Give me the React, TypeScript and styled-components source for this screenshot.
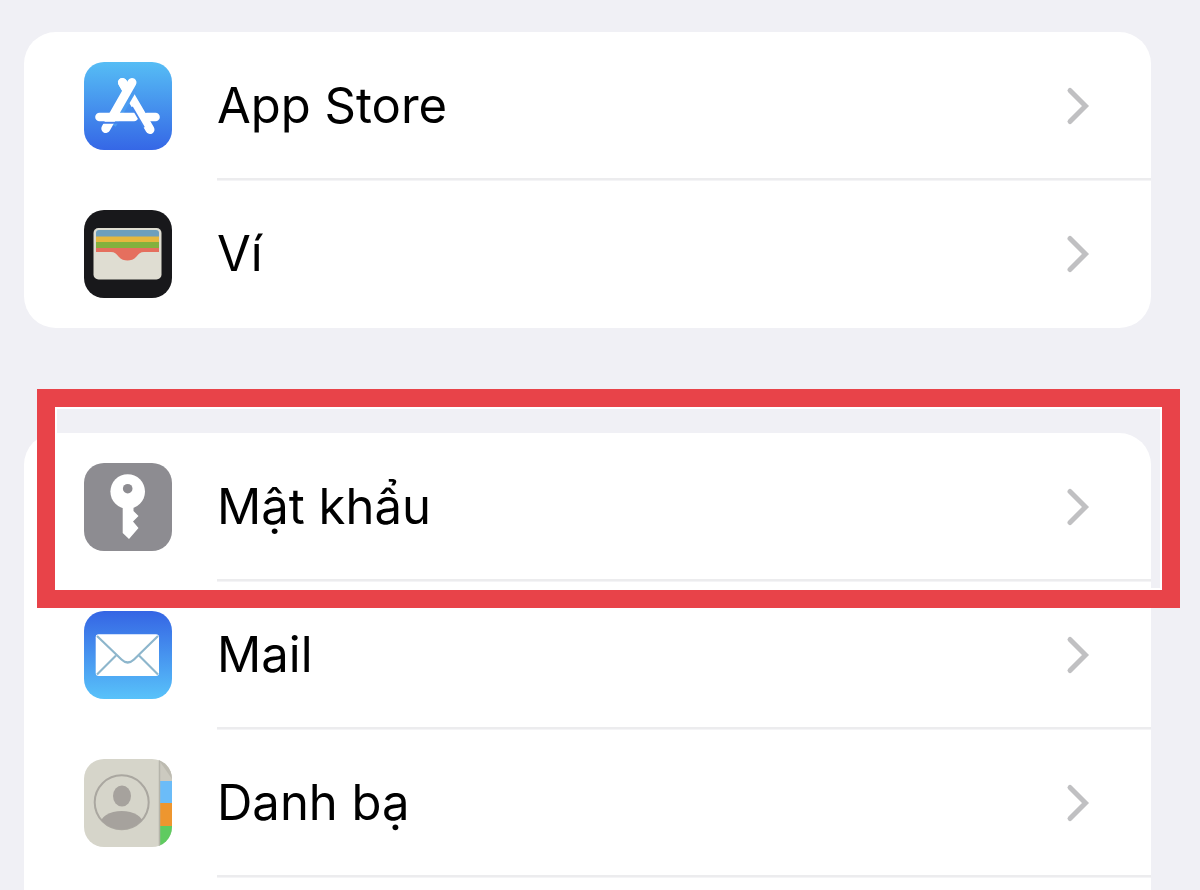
import React from "react";
import styled, { createGlobalStyle } from "styled-components";

const GlobalStyle = createGlobalStyle`
  *, *::before, *::after { box-sizing: border-box; }
  body {
    margin: 0;
    background: #f0f0f5;
    color: #000;
    font-family: Inter, "Liberation Sans", sans-serif;
  }
`;

const Page = styled.main`
  display: flex;
  flex-direction: column;
  gap: 105px;
  min-height: 100vh;
  padding: 32px 49px 0 24px;
`;

const Group = styled.ul<{ $open?: boolean }>`
  flex: ${(p) => (p.$open ? "1 0 auto" : "none")};
  margin: 0;
  padding: 0;
  list-style: none;
  background: #fff;
  border-radius: ${(p) => (p.$open ? "32px 32px 0 0" : "32px")};
`;

const Item = styled.li`
  position: relative;
`;

const RowLink = styled.a`
  display: flex;
  align-items: center;
  gap: 45px;
  height: 148px;
  padding-left: 60px;
  color: inherit;
  text-decoration: none;
`;

const AppIcon = styled.svg`
  flex: none;
  width: 88px;
  height: 88px;
  border-radius: 20px;
`;

const RowBody = styled.span<{ $divider: boolean }>`
  flex: 1;
  align-self: stretch;
  display: flex;
  align-items: center;
  justify-content: space-between;
  padding-right: 61px;
  box-shadow: ${(p) =>
    p.$divider ? "inset 0 -2px 0 #ececee, 0 1px 0 #f4f4f6" : "none"};
`;

const Label = styled.span`
  font-size: 49px;
  line-height: 60px;
`;

const Chevron = styled.svg`
  flex: none;
  width: 24px;
  height: 40px;
`;

const Highlight = styled.div`
  position: absolute;
  z-index: 1;
  inset: -44px -29px -27px 13px;
  border: 18px solid #e84349;
  box-shadow: inset 0 0 0 2px #fff;
  pointer-events: none;
`;

function AppStoreIcon() {
  return (
    <AppIcon viewBox="0 0 88 88" aria-hidden="true">
      <defs>
        <linearGradient id="store" x1="0" y1="0" x2="0" y2="1">
          <stop offset="0" stopColor="#56bdf5" />
          <stop offset="1" stopColor="#3567e6" />
        </linearGradient>
      </defs>
      <rect width="88" height="88" fill="url(#store)" />
      <path d="M38.500 20.500L66 67.500" stroke="#fff" strokeWidth="9" strokeLinecap="round" />
      <path d="M48 26L27 62" stroke="#4b9bf0" strokeWidth="11" />
      <g fill="none" stroke="#fff" strokeWidth="9" strokeLinecap="round">
        <path d="M38.500 20.500L42 26.500" />
        <path d="M48 20.500L21.800 66.500" />
      </g>
      <path d="M14 60.800H36" stroke="#4380eb" strokeWidth="2" />
      <g fill="none" stroke="#fff" strokeWidth="8.600" strokeLinecap="round">
        <path d="M15.500 55H50" />
        <path d="M63 55H71.500" />
      </g>
      <path d="M48 45L60 65.500" stroke="#4686ec" strokeWidth="1.800" />
    </AppIcon>
  );
}

function WalletIcon() {
  return (
    <AppIcon viewBox="0 0 88 88" aria-hidden="true">
      <defs>
        <clipPath id="cards">
          <rect x="12" y="20" width="63" height="47" rx="3" />
        </clipPath>
      </defs>
      <rect width="88" height="88" fill="#18181b" />
      <rect x="9.5" y="18" width="68" height="51.5" rx="5" fill="#dfddd2" />
      <g clipPath="url(#cards)">
        <rect x="12" y="20" width="63" height="8" fill="#6d9fbd" />
        <rect x="12" y="26.5" width="63" height="6" fill="#e5b83f" />
        <rect x="12" y="32" width="63" height="7" fill="#83b13e" />
        <path
          d="M12 38H75V42H60C56 42 54.500 44 52.500 46.500C50 49.500 46.500 50.500 43.500 50.500S37 49.500 34.500 46.500C32.500 44 31 42 27 42H12Z"
          fill="#e56f5e"
        />
      </g>
    </AppIcon>
  );
}

function KeyIcon() {
  return (
    <AppIcon viewBox="0 0 88 88" aria-hidden="true">
      <rect width="88" height="88" fill="#8d8c91" />
      <circle cx="43.7" cy="28.6" r="17.3" fill="#fff" />
      <path
        d="M38.700 42H49.500V48L54.500 53L49 58.500L54.500 65L45 76L38.700 70Z"
        fill="#fff"
      />
      <circle cx="43.700" cy="25.700" r="4.800" fill="#8d8c91" />
    </AppIcon>
  );
}

function MailIcon() {
  return (
    <AppIcon viewBox="0 0 88 88" aria-hidden="true">
      <defs>
        <linearGradient id="mail" x1="0" y1="0" x2="0" y2="1">
          <stop offset="0" stopColor="#3565e4" />
          <stop offset="1" stopColor="#58c2fa" />
        </linearGradient>
      </defs>
      <rect width="88" height="88" fill="url(#mail)" />
      <rect x="11.700" y="23.300" width="63.300" height="41.700" rx="3" fill="#fff" />
      <g fill="none" stroke="#8db6cc" strokeWidth="2.200">
        <path d="M13 25L37.500 48.500Q43.700 54.500 50 48.500L74 25" />
        <path d="M13 63.500L32 44.500" />
        <path d="M74 63.500L55 44.500" />
      </g>
    </AppIcon>
  );
}

function ContactsIcon() {
  return (
    <AppIcon viewBox="0 0 88 88" aria-hidden="true">
      <defs>
        <clipPath id="portrait">
          <circle cx="37.700" cy="43.300" r="27" />
        </clipPath>
      </defs>
      <rect width="88" height="88" fill="#d6d5ca" />
      <rect x="75.500" width="12.500" height="22" fill="#bdbbb1" />
      <path d="M75.500 2L88 20V22H75.500Z" fill="#cccac0" />
      <rect x="75.500" y="22" width="12.500" height="22" fill="#6bbcf8" />
      <rect x="75.500" y="44" width="12.500" height="23" fill="#ee962f" />
      <rect x="75.500" y="67" width="12.500" height="21" fill="#5fcb60" />
      <path d="M75.500 0V88" stroke="#b5b4aa" strokeWidth="1.500" />
      <circle cx="37.700" cy="43.300" r="27" fill="none" stroke="#aaa7a0" strokeWidth="2" />
      <g clipPath="url(#portrait)" fill="#a6a29d">
        <ellipse cx="38" cy="37" rx="9" ry="10.500" />
        <ellipse cx="37.700" cy="66" rx="22" ry="14" />
      </g>
    </AppIcon>
  );
}

interface Entry {
  label: string;
  icon: React.ReactNode;
  highlighted?: boolean;
}

const storeEntries: Entry[] = [
  { label: "App Store", icon: <AppStoreIcon /> },
  { label: "Ví", icon: <WalletIcon /> },
];

const accountEntries: Entry[] = [
  { label: "Mật khẩu", icon: <KeyIcon />, highlighted: true },
  { label: "Mail", icon: <MailIcon /> },
  { label: "Danh bạ", icon: <ContactsIcon /> },
];

function SettingsRow({ entry, divider }: { entry: Entry; divider: boolean }) {
  return (
    <Item>
      <RowLink href="#">
        {entry.icon}
        <RowBody $divider={divider}>
          <Label>{entry.label}</Label>
          <Chevron viewBox="0 0 24 40" aria-hidden="true">
            <path
              d="M4 4.500L19.500 20L4 35.500"
              fill="none"
              stroke="#c0c0c2"
              strokeWidth="5"
              strokeLinecap="round"
            />
          </Chevron>
        </RowBody>
      </RowLink>
      {entry.highlighted && <Highlight />}
    </Item>
  );
}

export default function App() {
  return (
    <>
      <GlobalStyle />
      <Page>
        <Group>
          {storeEntries.map((entry, i) => (
            <SettingsRow
              key={entry.label}
              entry={entry}
              divider={i < storeEntries.length - 1}
            />
          ))}
        </Group>
        <Group $open>
          {accountEntries.map((entry) => (
            <SettingsRow key={entry.label} entry={entry} divider />
          ))}
        </Group>
      </Page>
    </>
  );
}
